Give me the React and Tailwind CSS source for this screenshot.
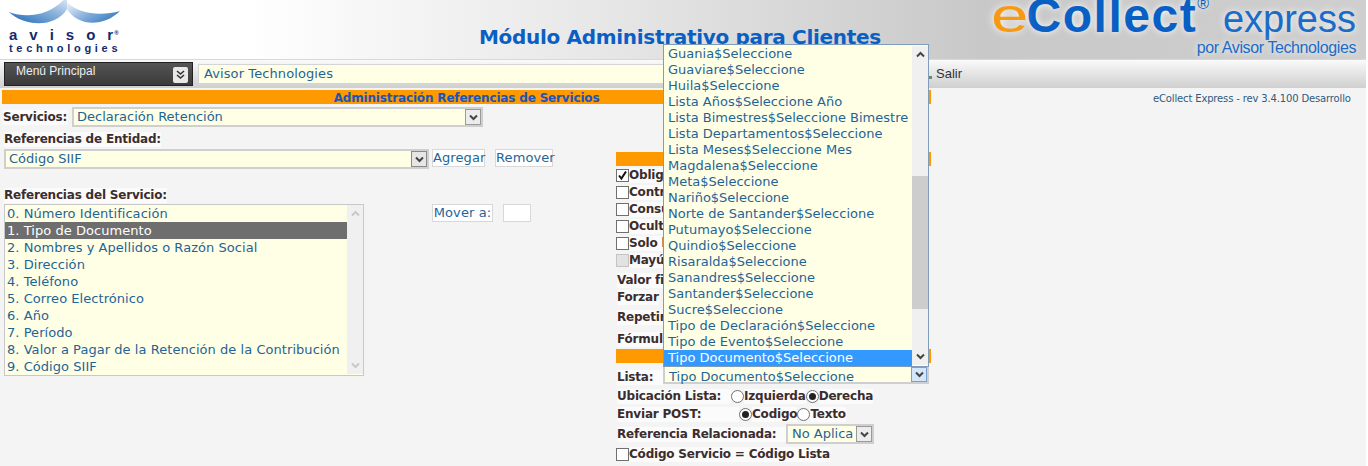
const font = { fontFamily: '"DejaVu Sans", Verdana, sans-serif' };

const servicio = [
  "0. Número Identificación",
  "1. Tipo de Documento",
  "2. Nombres y Apellidos o Razón Social",
  "3. Dirección",
  "4. Teléfono",
  "5. Correo Electrónico",
  "6. Año",
  "7. Período",
  "8. Valor a Pagar de la Retención de la Contribución",
  "9. Código SIIF",
];

const opciones = [
  "Guania$Seleccione",
  "Guaviare$Seleccione",
  "Huila$Seleccione",
  "Lista Años$Seleccione Año",
  "Lista Bimestres$Seleccione Bimestre",
  "Lista Departamentos$Seleccione",
  "Lista Meses$Seleccione Mes",
  "Magdalena$Seleccione",
  "Meta$Seleccione",
  "Nariño$Seleccione",
  "Norte de Santander$Seleccione",
  "Putumayo$Seleccione",
  "Quindio$Seleccione",
  "Risaralda$Seleccione",
  "Sanandres$Seleccione",
  "Santander$Seleccione",
  "Sucre$Seleccione",
  "Tipo de Declaración$Seleccione",
  "Tipo de Evento$Seleccione",
  "Tipo Documento$Seleccione",
];

const checks = [
  { label: "Obligatorio", checked: true },
  { label: "Control" },
  { label: "Consulta" },
  { label: "Oculto" },
  { label: "Solo lectura" },
  { label: "Mayúsculas", disabled: true },
];

function Chevron({ up, className = "text-[#444]" }) {
  return (
    <svg width="9" height="7" viewBox="0 0 9 7" className={className}>
      <path
        d={up ? "M1 5.5 4.5 2 8 5.5" : "M1 1.5 4.5 5 8 1.5"}
        fill="none"
        stroke="currentColor"
        strokeWidth="2"
      />
    </svg>
  );
}

function SelectBox({ value, className = "", textClass = "", arrowClass = "bg-[#ececec] border-[#9a9a9a]" }) {
  return (
    <div className={`flex items-stretch border-2 border-[#cfcfcf] bg-[#ffffe6] ${className}`}>
      <span className={`flex-1 whitespace-nowrap pl-[1px] text-[13px] leading-[15px] text-[#1f6496] ${textClass}`}>
        {value}
      </span>
      <span className={`flex w-[16px] items-center justify-center border ${arrowClass}`}>
        <Chevron />
      </span>
    </div>
  );
}

function Label({ children, className = "" }) {
  return (
    <span className={`block whitespace-nowrap bg-[#fbfbfb] text-[12px] font-bold leading-[15px] tracking-[-0.2px] text-[#3b2d2d] ${className}`}>
      {children}
    </span>
  );
}

function Check({ checked, disabled }) {
  return (
    <span
      className={`flex h-[13px] w-[13px] shrink-0 items-center justify-center border ${
        disabled ? "border-[#c4c4c4] bg-[#e2e2e2]" : "border-[#707070] bg-white"
      }`}
    >
      {checked && (
        <svg width="11" height="11" viewBox="0 0 11 11">
          <path d="M2 5.5 4.4 8.5 9 1.5" fill="none" stroke="#111" strokeWidth="2" />
        </svg>
      )}
    </span>
  );
}

function Radio({ checked }) {
  return (
    <span className="flex h-[13px] w-[13px] shrink-0 items-center justify-center rounded-full border border-[#707070] bg-white">
      {checked && <span className="h-[7px] w-[7px] rounded-full bg-[#222]" />}
    </span>
  );
}

function Btn({ children, className = "" }) {
  return (
    <span className={`h-[18px] border border-[#d8d8d8] bg-white text-center text-[13px] leading-[16px] tracking-[0.1px] text-[#1f6496] ${className}`}>
      {children}
    </span>
  );
}

function ScrollTrack({ className = "", children }) {
  return <div className={`flex w-[16px] shrink-0 flex-col items-center justify-between bg-[#f0f0f0] py-[5px] ${className}`}>{children}</div>;
}

function Logo() {
  return (
    <div className="w-[150px] shrink-0 overflow-hidden">
      <svg width="124" height="27" viewBox="0 0 124 27" className="block">
        <defs>
          <linearGradient id="alaIzq" x1="0" y1="1" x2="1" y2="0">
            <stop offset="0.1" stopColor="#2f74bd" />
            <stop offset="0.6" stopColor="#8fb6dd" />
            <stop offset="1" stopColor="#e6eef8" />
          </linearGradient>
          <linearGradient id="alaDer" x1="0" y1="0" x2="1" y2="0.6">
            <stop offset="0" stopColor="#f2f6fb" />
            <stop offset="0.6" stopColor="#7aa8d8" />
            <stop offset="1" stopColor="#3f80c4" />
          </linearGradient>
        </defs>
        <path d="M9 12C28 19 52 15 67 -4L67 9C56 28 24 27 9 12Z" fill="url(#alaIzq)" />
        <path d="M67 2C80 15 102 16 120 11 104 27 78 27 67 9Z" fill="url(#alaDer)" />
      </svg>
      <div className="ml-[9px] mt-[1px] flex items-start whitespace-nowrap text-[15px] font-bold leading-[14px] tracking-[12px] text-[#14296b] [font-family:'Liberation_Sans',sans-serif]">
        avisor
        <span className="-ml-[11px] text-[6px] leading-[10px] tracking-normal">®</span>
      </div>
      <div className="ml-[9px] whitespace-nowrap text-[11px] font-bold leading-[12px] tracking-[3.7px] text-[#14296b] [font-family:'Liberation_Sans',sans-serif]">
        technologies
      </div>
    </div>
  );
}

function Brand() {
  return (
    <div className="flex h-[59px] w-[380px] shrink-0 flex-col items-end overflow-hidden pr-[10px] [font-family:'Liberation_Sans',sans-serif] [text-shadow:0_0_7px_#ffffff]">
      <div className="-mt-[4px] flex h-[40px] items-baseline whitespace-nowrap leading-[40px]">
        <span className="inline-block w-[36px] origin-left scale-x-[1.4] text-[48px] text-[#f79a12]">e</span>
        <span className="text-[48px] font-bold tracking-[1.5px] text-[#0a5fc4]">Collect</span>
        <span className="relative -top-[23px] text-[16px] text-[#0a5fc4]">®</span>
        <span className="ml-[14px] text-[38px] text-[#1a6cc8]">express</span>
      </div>
      <div className="mt-[2px] whitespace-nowrap text-[16px] leading-[19px] tracking-[-0.4px] text-[#1a6cc8]">
        por Avisor Technologies
      </div>
    </div>
  );
}

export default function App() {
  return (
    <div className="relative h-[466px] w-[1368px] overflow-hidden bg-white" style={font}>
      <div className="h-full w-[1366px] bg-[#f4f4f4]">
        {/* Cabecera */}
        <header className="flex h-[59px] items-start overflow-hidden bg-[linear-gradient(90deg,#ffffff_18%,#e6e6e6_45%,#c8c8c8_72%,#cfcfcf_100%)]">
          <Logo />
          <h1 className="ml-[329px] mt-[23px] flex-1 whitespace-nowrap text-[20px] font-bold leading-[28px] tracking-[-0.31px] text-[#0a5fc4]">
            Módulo Administrativo para Clientes
          </h1>
          <Brand />
        </header>
        <div className="h-[1px] bg-[#eed4b0]" />

        {/* Barra de menu */}
        <nav className="flex h-[28px] items-center bg-[linear-gradient(180deg,#fafafa,#cfcfcf)] pl-[4px]">
          <div className="flex h-[24px] w-[189px] items-start justify-between border border-[#222] bg-[linear-gradient(180deg,#555,#3a3a3a)] pl-[11px] pr-[4px]">
            <span className="text-[12px] leading-[16px] text-[#eeeeee] [font-family:'Liberation_Sans',sans-serif]">Menú Principal</span>
            <span className="mt-[4px] flex h-[16px] w-[15px] items-center justify-center rounded-[2px] bg-[#e8e8e8]">
              <svg width="9" height="10" viewBox="0 0 9 10">
                <path d="M1 1 4.5 4 8 1M1 5 4.5 8 8 5" fill="none" stroke="#333" strokeWidth="1.6" />
              </svg>
            </span>
          </div>
          <div className="ml-[5px] h-[20px] w-[730px] border border-[#d4d4d4] bg-[#ffffe6] pl-[5px] text-[13px] leading-[17px] tracking-[0.1px] text-[#1f6496]">
            Avisor Technologies
          </div>
          <span className="ml-[1px] mt-[6px] h-[3px] w-[3px] bg-[#6a8a6a]" />
          <span className="ml-[4px] text-[13px] text-[#333] [font-family:'Liberation_Sans',sans-serif]">Salir</span>
        </nav>

        {/* Titulo de la seccion */}
        <div className="mt-[2px] flex h-[14px] items-start">
          <div className="ml-[2px] h-[14px] w-[929px] bg-[#ff9900] text-center text-[12px] font-bold leading-[16px] tracking-[-0.17px] text-[#1a55b8]">
            Administración Referencias de Servicios
          </div>
          <span className="ml-[222px] text-[10px] leading-[17px] tracking-[-0.15px] text-[#2e5b80]">
            eCollect Express - rev 3.4.100 Desarrollo
          </span>
        </div>

        <main className="flex items-start">
          {/* Columna izquierda */}
          <section className="w-[616px] shrink-0">
            <div className="mt-[3px] flex items-center pl-[3px]">
              <Label className="w-[65px]">Servicios:</Label>
              <SelectBox value="Declaración Retención" className="ml-[4px] h-[20px] w-[411px] pl-[2px]" />
            </div>
            <div className="mt-[5px] flex pl-[4px]">
              <Label>Referencias de Entidad:</Label>
            </div>
            <div className="mt-[2px] flex items-start pl-[4px]">
              <SelectBox value="Código SIIF" className="h-[20px] w-[425px] pl-[2px]" arrowClass="bg-[#e6e6e6] border-[#8a8a8a]" />
              <Btn className="ml-[3px] w-[53px]">Agregar</Btn>
              <Btn className="ml-[10px] w-[58px]">Remover</Btn>
            </div>
            <div className="mt-[19px] flex pl-[4px]">
              <Label>Referencias del Servicio:</Label>
            </div>
            <div className="mt-[1px] flex items-start pl-[4px]">
              <div className="flex h-[172px] w-[360px] border border-[#c8c8c8] bg-[#ffffe6] pb-[1px]">
                <ul className="w-[342px] shrink-0">
                  {servicio.map((s, i) => (
                    <li
                      key={s}
                      className={`h-[17px] whitespace-nowrap pl-[2px] text-[13px] leading-[17px] tracking-[0.05px] ${
                        i === 1 ? "bg-[#6e6e6e] text-white" : "text-[#1f6496]"
                      }`}
                    >
                      {s}
                    </li>
                  ))}
                </ul>
                <ScrollTrack>
                  <Chevron up className="text-[#c8c8c8]" />
                  <Chevron className="text-[#c8c8c8]" />
                </ScrollTrack>
              </div>
              <Btn className="ml-[68px] w-[61px]">Mover a:</Btn>
              <span className="ml-[10px] h-[18px] w-[28px] border border-[#d8d8d8] bg-white" />
            </div>
          </section>

          {/* Columna derecha */}
          <section className="w-[315px] shrink-0 overflow-hidden pt-[48px]">
            <div className="h-[14px] bg-[#ff9900]" />
            <div className="mt-[1px] flex flex-col">
              {checks.map((c) => (
                <div key={c.label} className="flex h-[17px] items-center">
                  <Check checked={c.checked} disabled={c.disabled} />
                  <Label>{c.label}</Label>
                </div>
              ))}
            </div>
            <div className="mt-[4px] flex pl-[1px]"><Label>Valor fijo</Label></div>
            <div className="mt-[2px] flex pl-[1px]"><Label>Forzar</Label></div>
            <div className="mt-[5px] flex pl-[1px]"><Label>Repetir</Label></div>
            <div className="mt-[7px] flex pl-[1px]"><Label>Fórmula</Label></div>
            <div className="mt-[2px] h-[14px] bg-[#ff9900]" />
            <div className="mt-[2px] flex h-[19px] items-start pl-[1px]">
              <Label className="mt-[5px] w-[46px]">Lista:</Label>
              <SelectBox
                value="Tipo Documento$Seleccione"
                className="h-[19px] w-[266px] pl-[3px]"
                textClass="pt-[2px]"
                arrowClass="bg-[#d4e6fa] border-[#7aa0cc]"
              />
            </div>
            <div className="mt-[3px] flex h-[18px] items-center pl-[1px]">
              <Label className="w-[114px]">Ubicación Lista:</Label>
              <Radio />
              <Label>Izquierda</Label>
              <Radio checked />
              <Label>Derecha</Label>
            </div>
            <div className="flex h-[18px] items-center pl-[1px]">
              <Label className="w-[122px]">Enviar POST:</Label>
              <Radio checked />
              <Label>Codigo</Label>
              <Radio />
              <Label>Texto</Label>
            </div>
            <div className="flex h-[22px] items-center pl-[1px]">
              <Label className="w-[169px]">Referencia Relacionada:</Label>
              <SelectBox value="No Aplica" className="h-[20px] w-[88px] pl-[3px]" />
            </div>
            <div className="mt-[1px] flex h-[17px] items-center">
              <Check />
              <Label>Código Servicio = Código Lista</Label>
            </div>
          </section>
        </main>
      </div>

      {/* Lista desplegada */}
      <div className="absolute left-[663px] top-[44px] flex h-[323px] w-[266px] border border-[#7f9db9] bg-[#ffffe6] py-[1px]">
        <ul className="w-[248px] shrink-0">
          {opciones.map((o, i) => (
            <li
              key={o}
              className={`h-[16px] whitespace-nowrap pl-[4px] text-[13px] leading-[16px] ${
                i === opciones.length - 1 ? "bg-[#3399ff] text-white" : "text-[#1f6496]"
              }`}
            >
              {o}
            </li>
          ))}
        </ul>
        <ScrollTrack className="relative">
          <Chevron up />
          <span className="absolute left-0 top-[130px] h-[133px] w-full bg-[#cdcdcd]" />
          <Chevron />
        </ScrollTrack>
      </div>
    </div>
  );
}
